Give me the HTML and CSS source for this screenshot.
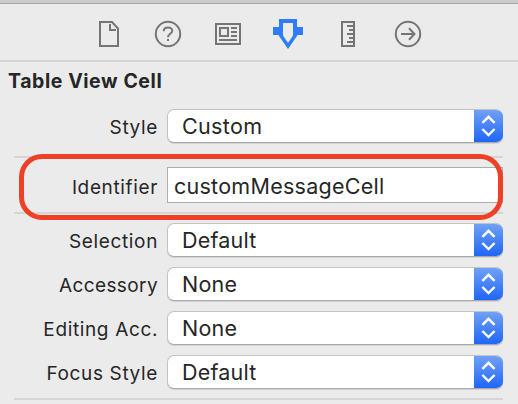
FILE: index.html
```html
<!DOCTYPE html>
<html lang="en">
<head>
<meta charset="utf-8">
<title>Attributes Inspector</title>
<link rel="stylesheet" href="styles.css">
</head>
<body>
<svg class="defs" aria-hidden="true">
  <symbol id="chevrons" viewBox="0 0 29 34"><path d="M8.4 13.8 14.5 7.8 20.6 13.8M8.4 20 14.500 26 20.600 20"/></symbol>
</svg>
<main class="inspector">
  <nav class="tabs">
    <svg class="tab" viewBox="0 0 32 32"><path d="M8 4H20L26 10.500V28H8ZM18 6V12H24"/></svg>
    <svg class="tab" viewBox="0 0 32 32"><circle cx="16" cy="16" r="12.200"/><path d="M11.700 13.200C11.700 8.300 20.300 8.300 20.300 12.800C20.300 16 16 15.600 16 19.200M16 21V23"/></svg>
    <svg class="tab" viewBox="0 0 32 32"><path d="M4 6H28V26H4ZM8 10H16V18H8ZM19 10H25M19 14H25M19 18H25M7 22H25"/></svg>
    <svg class="tab tab-active" viewBox="0 0 32 32"><path class="solid" fill-rule="evenodd" d="M7 1H25V9H31V17H25V18L16 31L7 18V17H1V9H7ZM11 5V17.500L16 25L21 17.500V5Z"/></svg>
    <svg class="tab" viewBox="0 0 32 32"><path d="M10 4H22V28H10ZM22 8H15M22 12H17M22 16H15M22 20H17M22 24H15"/></svg>
    <svg class="tab" viewBox="0 0 32 32"><circle cx="16" cy="16" r="12.200"/><path d="M9 16H22M17 10.200 22.500 16 17 21.800"/></svg>
  </nav>
  <section class="attributes">
    <h1 class="title">Table View Cell</h1>
    <div class="row"><span class="label">Style</span><div class="select"><span class="value v-custom">Custom</span><svg class="stepper"><use href="#chevrons"/></svg></div></div>
    <div class="row row-field">
      <span class="label">Identifier</span><div class="field"><span class="value">customMessageCell</span></div>
      <div class="highlight"></div>
    </div>
    <div class="group">
      <div class="row"><span class="label">Selection</span><div class="select"><span class="value">Default</span><svg class="stepper"><use href="#chevrons"/></svg></div></div>
      <div class="row"><span class="label l-accessory">Accessory</span><div class="select"><span class="value">None</span><svg class="stepper"><use href="#chevrons"/></svg></div></div>
      <div class="row"><span class="label">Editing Acc.</span><div class="select"><span class="value">None</span><svg class="stepper"><use href="#chevrons"/></svg></div></div>
      <div class="row"><span class="label">Focus Style</span><div class="select"><span class="value">Default</span><svg class="stepper"><use href="#chevrons"/></svg></div></div>
    </div>
  </section>
</main>
</body>
</html>
```
FILE: styles.css
```css
* { box-sizing: border-box; }
body { margin: 0; background: #ebebeb; color: #262626; font-family: Inter, "Liberation Sans", sans-serif; }
.defs { display: block; width: 0; height: 0; }
.inspector { width: 518px; height: 404px; overflow: hidden; border-top: 3px solid #cbcbcb; }
.tabs { height: 59px; padding: 0 94px 0 92px; display: flex; justify-content: space-between; align-items: flex-start; border-top: 1px solid #a5a5a5; border-bottom: 2px solid #d5d5d5; }
.tab { width: 32px; height: 32px; margin-top: 14px; fill: none; stroke: #757575; stroke-width: 2; }
.tab-active .solid { fill: #2f7cf6; stroke: none; }
.attributes { padding: 0 15px 0 14px; }
.title { margin: 0 0 0 -6px; height: 47px; padding-top: 7px; font-size: 19.5px; line-height: 24px; font-weight: 700; letter-spacing: 0.57px; white-space: nowrap; }
.row { display: flex; height: 34px; }
.label { width: 144px; margin-right: 9px; text-align: right; font-size: 19px; line-height: 38px; letter-spacing: 0.64px; white-space: nowrap; }
.l-accessory { letter-spacing: 0.4px; }
.value { font-size: 21.5px; line-height: 34px; letter-spacing: 0.2px; white-space: nowrap; }
.v-custom { letter-spacing: 0.35px; }
.select { display: flex; justify-content: space-between; flex: 1; height: 34px; padding-left: 14px; border-radius: 7px; background: #fff; overflow: hidden; border: 1px solid #c3c3c3; border-bottom-color: #a9a9a9; border-right: 0; box-shadow: 0 1px 1px #d2d2d2; }
.select .value { margin-top: -1px; }
.stepper { width: 29px; height: 34px; margin-top: -1px; flex: none; fill: none; stroke: #fff; stroke-width: 2.4; background: linear-gradient(#73a3f5, #1c64f8); }
.row-field { position: relative; height: 58px; margin-top: 13px; padding-top: 9px; border-top: 2px solid #d5d5d5; border-bottom: 2px solid #d5d5d5; }
.row-field .label { line-height: 42px; }
.field { flex: 1; height: 36px; padding-left: 6px; background: #fff; border: 1px solid #adadad; }
.field .value { line-height: 36px; letter-spacing: 0.26px; }
.highlight { position: absolute; left: 5px; top: -4px; width: 484px; height: 66px; border: 5px solid #ee4026; border-radius: 23px; }
.group { display: flex; flex-direction: column; gap: 10px; height: 186px; padding-top: 9px; border-bottom: 2px solid #d5d5d5; }
```
